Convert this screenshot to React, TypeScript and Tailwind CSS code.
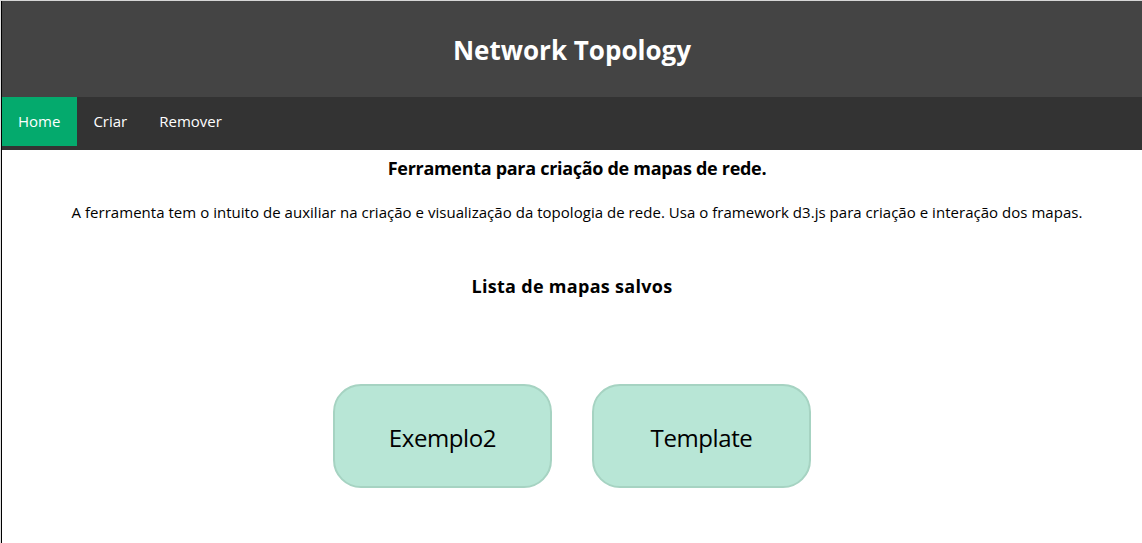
import { useState } from "react";

function App() {
    const [active, setActive] = useState("Home");
    const links = ["Home", "Criar", "Remover"];
    const maps = ["Exemplo2", "Template"];

    return (
        <div
            className="min-h-[543px] bg-white border-t border-[#d6d6d6] border-l border-l-[#e0e0e0]"
            style={{ fontFamily: '"Open Sans", "Noto Sans", sans-serif' }}>
            <div className="min-h-[542px] border-l border-black">
                <header className="bg-[#444444] h-24 flex items-center justify-center pt-[2px]">
                    <h1 className="text-white text-[26px] font-bold">
                        Network Topology
                    </h1>
                </header>
                <nav className="bg-[#333333] h-[53px] flex items-start">
                    {links.map((link) => (
                        <a
                            key={link}
                            href="#"
                            onClick={() => setActive(link)}
                            className={`${
                                active === link ? "bg-[#04aa6d]" : ""
                            } ${
                                link === "Home" ? "pl-4 pr-[17px]" : "px-4"
                            } h-[49px] flex items-center text-white text-[15px]`}>
                            {link}
                        </a>
                    ))}
                </nav>
                <main className="text-black text-center">
                    <h2 className="mt-[6px] pl-[10px] text-[18px] font-bold leading-6 tracking-[-0.3px]">
                        Ferramenta para criação de mapas de rede.
                    </h2>
                    <p className="mt-[22px] pl-[10px] text-[15px] leading-5 tracking-[0.03px]">
                        A ferramenta tem o intuito de auxiliar na criação e
                        visualização da topologia de rede. Usa o framework
                        d3.js para criação e interação dos mapas.
                    </p>
                    <h3 className="mt-[52px] text-[18px] font-bold leading-6 tracking-[0.3px]">
                        Lista de mapas salvos
                    </h3>
                    <div className="mt-[86px] flex justify-center gap-10">
                        {maps.map((m) => (
                            <button
                                key={m}
                                className="w-[219px] h-[104px] rounded-[28px] bg-[#b8e6d6] border-2 border-[#a6d3c2] text-[24px] tracking-[-0.4px] pt-1">
                                {m}
                            </button>
                        ))}
                    </div>
                </main>
            </div>
        </div>
    );
}

export default App;
